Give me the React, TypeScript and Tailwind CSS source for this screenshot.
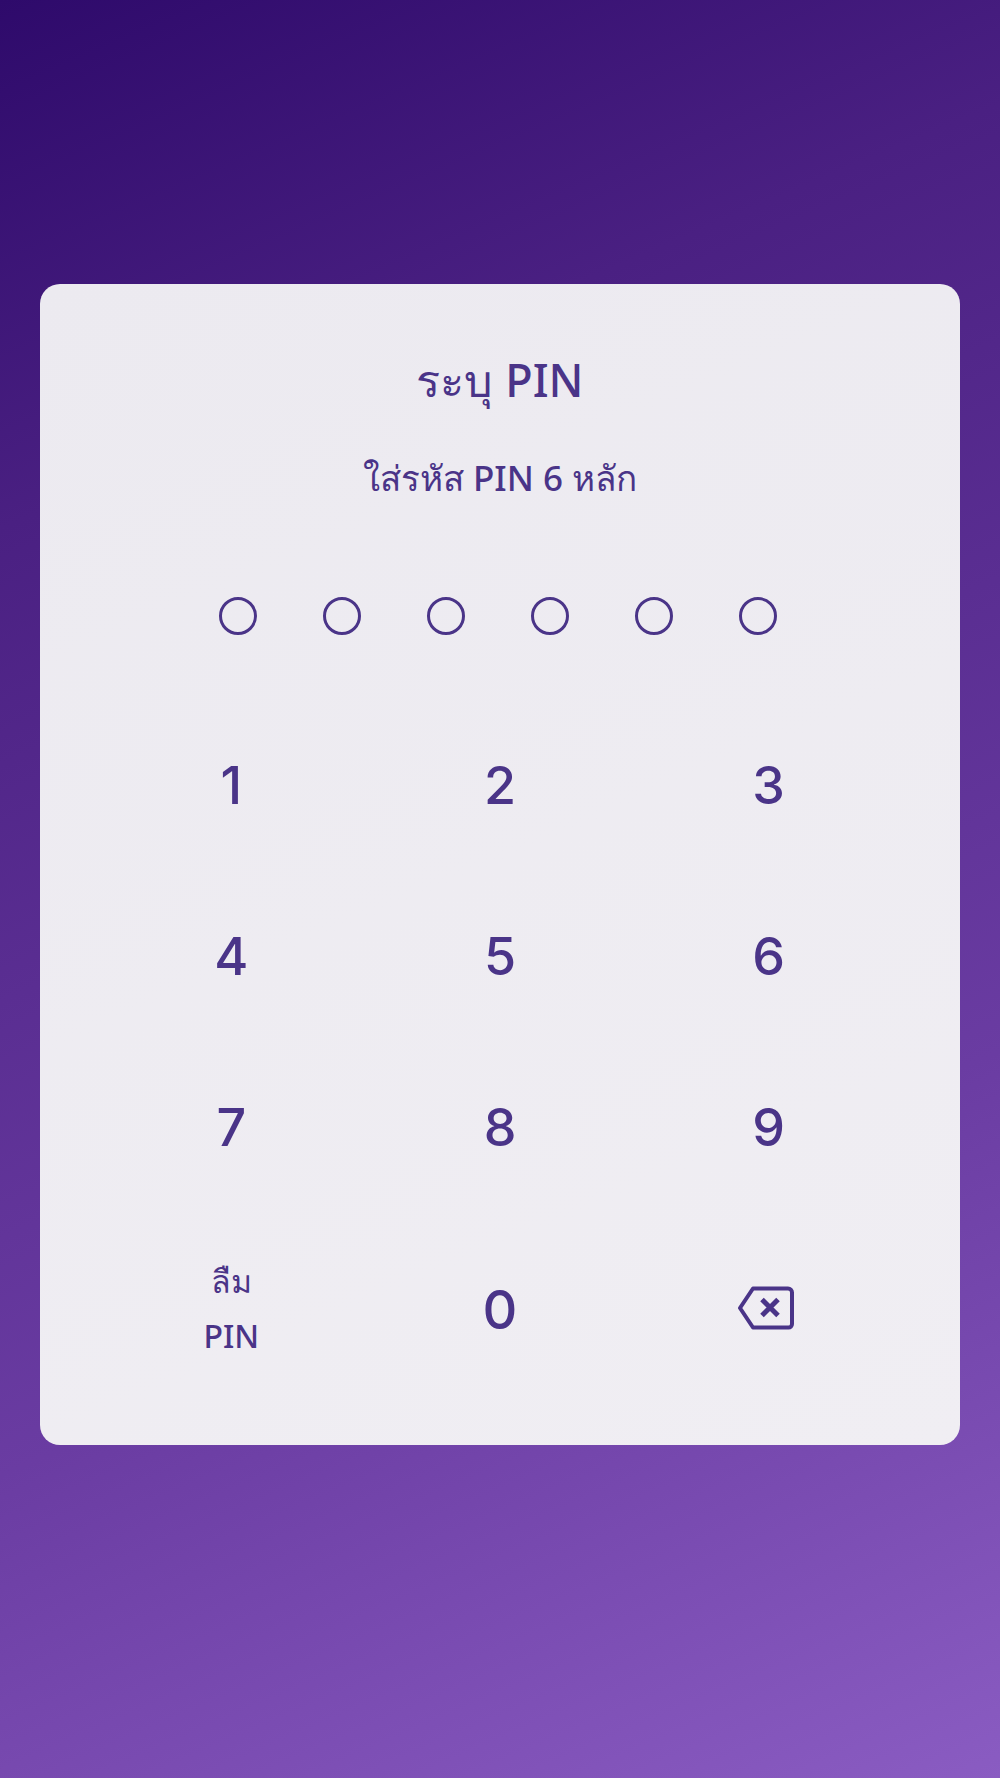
const keys = ["1", "2", "3", "4", "5", "6", "7", "8", "9"];
const dots = [0, 1, 2, 3, 4, 5];

const DeleteIcon = () => (
  <svg width="56" height="44" viewBox="0 0 56 44" fill="none" stroke="#4a3488" strokeWidth="4" strokeLinejoin="round" strokeLinecap="round">
    <path d="M15 2.500H50a4 4 0 0 1 4 4V38a3.500 3.500 0 0 1-3.500 3.500H15L2 22Z" />
    <path d="M24 13.500 40 29.500M40 13.500 24 29.500" strokeWidth="5" strokeLinecap="butt" />
  </svg>
);

export default function App() {
  return (
    <div className="min-h-[1778px] w-full flex items-start px-10 pt-[284px] bg-[linear-gradient(157deg,#2e0a6b_0%,#4a2082_24%,#6a3ca2_67%,#8a5cc2_100%)] font-['Noto_Sans','Liberation_Sans',sans-serif] text-[#4a3488]">
      <div className="w-full h-[1161px] rounded-[20px] bg-[linear-gradient(157deg,#eceaf0,#f0eef3)] flex flex-col items-center">
        <h1 className="mt-[68px] h-[56px] leading-[56px] text-[45px] font-medium">ระบุ PIN</h1>
        <p className="mt-[48px] h-[44px] leading-[44px] text-[35px] font-medium">ใส่รหัส PIN 6 หลัก</p>

        <div className="mt-[97px] flex gap-[66px] mr-[4px]">
          {dots.map((d) => (
            <div key={d} className="w-[38px] h-[38px] rounded-full border-[3px] border-[#4a3488]" />
          ))}
        </div>

        <div className="mt-[65px] w-full px-[57px] grid grid-cols-3 auto-rows-[171px] text-center font-['Inter',sans-serif]">
          {keys.map((k) => (
            <div key={k} className="flex items-center justify-center text-[52px] font-medium">
              {k}
            </div>
          ))}
          <div className="h-[200px] flex flex-col items-center justify-center pb-[10px] text-[32px] leading-[55px] font-medium font-['Noto_Sans',sans-serif]">
            <span>ลืม</span>
            <span>PIN</span>
          </div>
          <div className="h-[200px] flex items-center justify-center pb-[8px] text-[54px] font-medium">0</div>
          <div className="h-[200px] flex items-center justify-center pb-[10px] pr-[6px]">
            <DeleteIcon />
          </div>
        </div>
      </div>
    </div>
  );
}
